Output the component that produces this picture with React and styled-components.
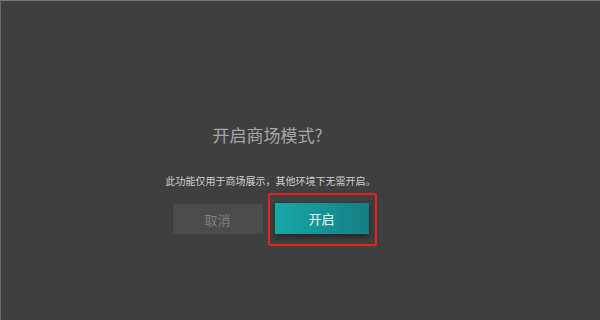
import React from "react";
import styled, { createGlobalStyle } from "styled-components";

const GlobalStyle = createGlobalStyle`
  html, body {
    margin: 0;
    padding: 0;
    background: #404040;
  }
  body {
    font-family: "Noto Sans CJK SC", "Noto Sans", sans-serif;
  }
`;

const Screen = styled.div`
  box-sizing: border-box;
  width: 600px;
  height: 320px;
  background: #3f3f3f;
  border-top: 1px solid #7a7a7a;
  border-left: 1px solid #6a6a6a;
  display: flex;
  justify-content: center;
  padding-right: 60px;
`;

const Dialog = styled.div`
  display: flex;
  flex-direction: column;
  align-items: center;
  padding-top: 124px;
`;

const Title = styled.h2`
  margin: 0 6px 0 0;
  font-size: 17px;
  line-height: 20px;
  font-weight: 400;
  color: #a6a6a6;
`;

const Message = styled.p`
  margin: 29px 0 0;
  font-size: 10px;
  line-height: 14px;
  color: #cfcfcf;
`;

const Actions = styled.div`
  display: flex;
  gap: 12px;
  margin-top: 16px;
`;

const Button = styled.button`
  position: relative;
  box-sizing: border-box;
  border: none;
  width: ${(p) => (p.$primary ? "94px" : "90px")};
  height: ${(p) => (p.$primary ? "31px" : "30px")};
  margin-top: ${(p) => (p.$primary ? "-1px" : "0")};
  font-family: inherit;
  font-size: 13px;
  color: ${(p) => (p.$primary ? "#e6f4f4" : "#7d7d7d")};
  background: ${(p) =>
    p.$primary ? "linear-gradient(90deg, #18a8a8, #137f84)" : "#4b4b4b"};
  box-shadow: ${(p) => (p.$primary ? "0 3px 6px rgba(0,0,0,0.45)" : "none")};
  cursor: pointer;
`;

const Highlight = styled.span`
  position: absolute;
  top: -10px;
  bottom: -12px;
  left: -7px;
  right: -8px;
  border: 2px solid #e5241f;
  border-radius: 2px;
  pointer-events: none;
`;

export default function App() {
  return (
    <>
      <GlobalStyle />
      <Screen>
        <Dialog>
          <Title>开启商场模式?</Title>
          <Message>此功能仅用于商场展示，其他环境下无需开启。</Message>
          <Actions>
            <Button>取消</Button>
            <Button $primary>
              开启
              <Highlight />
            </Button>
          </Actions>
        </Dialog>
      </Screen>
    </>
  );
}
